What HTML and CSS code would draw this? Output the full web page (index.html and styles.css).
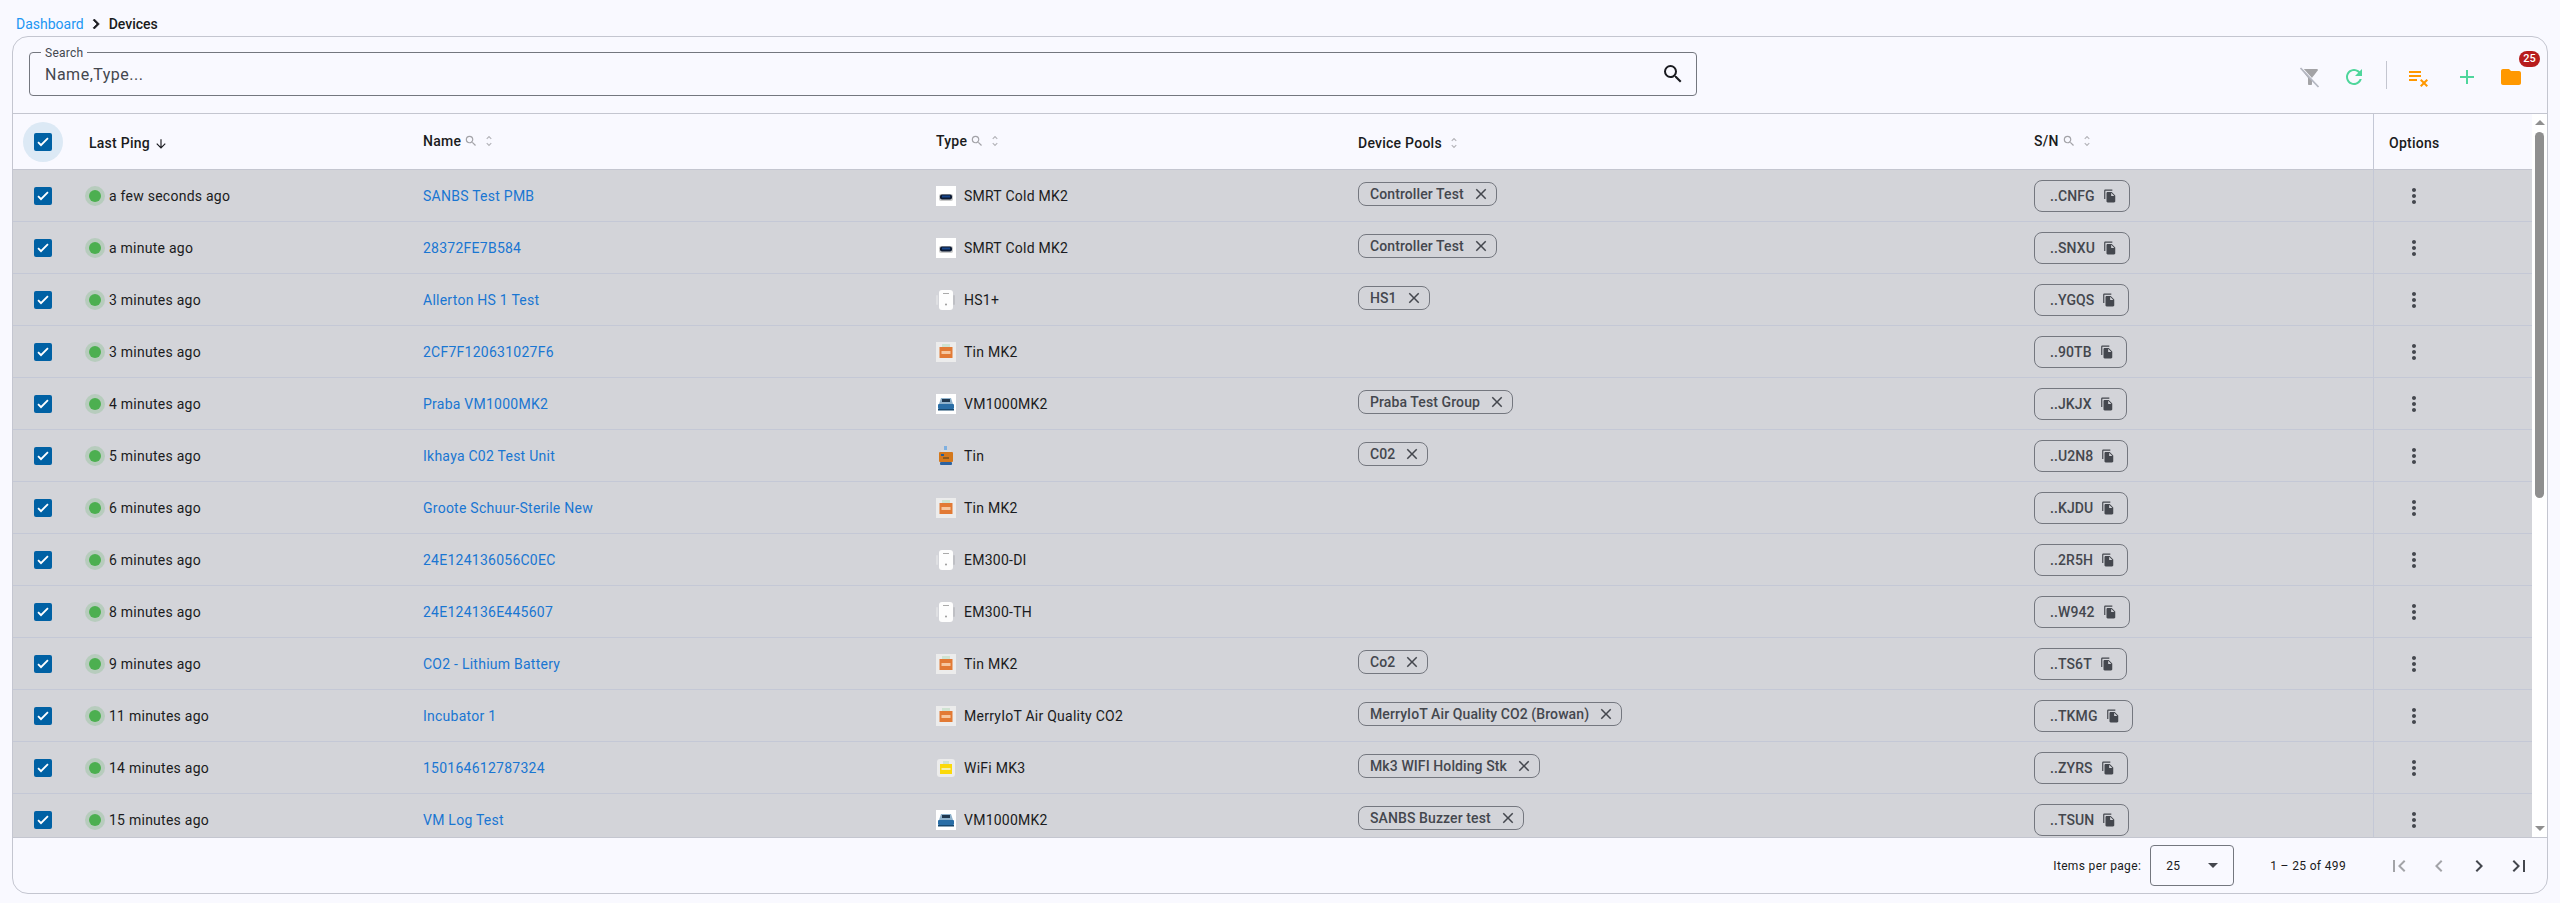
FILE: index.html
```html
<!DOCTYPE html>
<html lang="en">
<head>
<meta charset="utf-8">
<title>Devices</title>
<link rel="stylesheet" href="styles.css">
</head>
<body>
<svg class="defs" width="0" height="0" aria-hidden="true">
  <symbol id="i-search" viewBox="0 0 24 24"><path d="M15.5 14h-.79l-.28-.27A6.471 6.471 0 0 0 16 9.5 6.5 6.5 0 1 0 9.5 16c1.61 0 3.09-.59 4.23-1.57l.27.28v.79l5 4.99L20.49 19l-4.99-5zm-6 0C7.01 14 5 11.99 5 9.5S7.01 5 9.5 5 14 7.01 14 9.5 11.99 14 9.5 14z"/></symbol>
  <symbol id="i-close" viewBox="0 0 24 24"><path d="M19 6.41 17.59 5 12 10.59 6.41 5 5 6.41 10.59 12 5 17.59 6.41 19 12 13.41 17.59 19 19 17.59 13.41 12z"/></symbol>
  <symbol id="i-more" viewBox="0 0 24 24"><path d="M12 8c1.1 0 2-.9 2-2s-.9-2-2-2-2 .9-2 2 .9 2 2 2zm0 2c-1.1 0-2 .9-2 2s.9 2 2 2 2-.9 2-2-.9-2-2-2zm0 6c-1.1 0-2 .9-2 2s.9 2 2 2 2-.9 2-2-.9-2-2-2z"/></symbol>
  <symbol id="i-unfold" viewBox="0 0 24 24"><path d="M12 5.83 15.17 9l1.41-1.41L12 3 7.41 7.59 8.83 9 12 5.83zm0 12.34L8.83 15l-1.41 1.41L12 21l4.59-4.59L15.17 15 12 18.17z"/></symbol>
  <symbol id="i-copy" viewBox="0 0 24 24"><path d="M16 1H4c-1.1 0-2 .9-2 2v14h2V3h12V1zm-1 4 6 6v10c0 1.1-.9 2-2 2H7.99C6.89 23 6 22.1 6 21l.01-14c0-1.1.89-2 1.99-2h7zm-1 7h5.5L14 6.5V12z"/></symbol>
  <symbol id="i-check" viewBox="0 0 18 18"><path d="M7 13.4 3.4 9.8l1.3-1.3L7 10.8l6.3-6.3 1.3 1.3z"/></symbol>
  <symbol id="d-cold" viewBox="0 0 20 20"><rect width="20" height="20" fill="#fff"/><rect x="3" y="8" width="14" height="7" rx="2" fill="#c9c9c9"/><rect x="4" y="8.5" width="12" height="5" rx="2" fill="#0c1a33"/><rect x="6" y="9.5" width="8" height="2" fill="#17458a"/></symbol>
  <symbol id="d-plug" viewBox="0 0 20 20"><rect x="0" y="5" width="2" height="10" rx="1" fill="#dfe0e3"/><rect x="17" y="5" width="2" height="10" rx="1" fill="#bfc0c5"/><rect x="3" y="0" width="14" height="20" rx="3" fill="#fdfdfd"/><rect x="7" y="3" width="6" height="1" fill="#aaa"/><circle cx="10" cy="14.5" r="1" fill="#9a9a9a"/></symbol>
  <symbol id="d-tin" viewBox="0 0 20 20"><rect width="20" height="20" fill="#ececec"/><rect x="6" y="2" width="8" height="3" fill="#cfe3d2"/><rect x="3.500" y="5" width="13" height="11" fill="#e27a35"/><rect x="5.500" y="9" width="9" height="3" fill="#f6c79f"/></symbol>
  <symbol id="d-vm" viewBox="0 0 20 20"><rect width="20" height="20" fill="#fff"/><path d="M5 4h10l2 6H3z" fill="#8fb2cc"/><rect x="6" y="5" width="8" height="3" fill="#20384f"/><rect x="2" y="10" width="16" height="5" rx="1" fill="#2a6ea6"/><rect x="2" y="15" width="16" height="1.500" fill="#17486f"/></symbol>
  <symbol id="d-box" viewBox="0 0 20 20"><rect x="8" y="0" width="3" height="4" fill="#7fb0e0"/><rect x="5" y="4" width="10" height="3" fill="#d8dade"/><rect x="3" y="6" width="14" height="10" rx="1" fill="#d4781c"/><rect x="5" y="8" width="3" height="2" fill="#235e9c"/><rect x="7" y="11" width="6" height="2" fill="#8a5a20"/><rect x="4" y="16" width="12" height="3" rx="1" fill="#2b62a0"/></symbol>
  <symbol id="d-wifi" viewBox="0 0 20 20"><rect x="1" y="1" width="18" height="18" rx="3" fill="#ececec"/><rect x="7" y="3" width="6" height="3" fill="#cfe3d2"/><rect x="4" y="6" width="12" height="10" fill="#fbd90a"/><rect x="5.500" y="10" width="9" height="2" fill="#f3f0b0"/></symbol>
</svg>

<nav class="crumbs">
  <a class="crumb-link">Dashboard</a>
  <svg class="crumb-sep" viewBox="0 0 24 24"><path d="M10 6 8.590 7.410 13.170 12l-4.580 4.590L10 18l6-6z"/></svg>
  <span class="crumb-current">Devices</span>
</nav>

<main class="card">
  <header class="toolbar">
    <div class="search">
      <span class="search-label">Search</span>
      <span class="search-input">Name,Type...</span>
      <svg class="search-icon"><use href="#i-search"/></svg>
    </div>
    <div class="actions">
      <svg class="act act-filter" viewBox="0 0 24 24"><path d="M4.250 5.610C6.270 8.200 10 13 10 13v6c0 .55.45 1 1 1h2c.55 0 1-.45 1-1v-6s3.720-4.800 5.740-7.390A.998.998 0 0 0 18.950 4H5.040a1 1 0 0 0-.79 1.610z"/><path class="slash-gap" d="M3.500 2.500 21 21.500"/><path class="slash" d="M2.500 3 20.500 22"/></svg>
      <svg class="act act-refresh" viewBox="0 0 24 24"><path d="M17.650 6.350C16.200 4.900 14.210 4 12 4c-4.420 0-7.990 3.580-7.990 8s3.570 8 7.990 8c3.730 0 6.840-2.550 7.730-6h-2.080c-.82 2.330-3.040 4-5.650 4-3.310 0-6-2.690-6-6s2.690-6 6-6c1.660 0 3.140.69 4.220 1.780L13 11h7V4l-2.350 2.350z"/></svg>
      <span class="act-divider"></span>
      <svg class="act act-clear" viewBox="0 0 24 24"><path d="M14 10H2v2h12v-2zm0-4H2v2h12V6zM2 16h8v-2H2v2zm12.410 6L17 19.410 19.590 22 21 20.590 18.410 18 21 15.410 19.590 14 17 16.590 14.410 14 13 15.410 15.590 18 13 20.590 14.410 22z"/></svg>
      <svg class="act act-add" viewBox="0 0 24 24"><path d="M19 13h-6v6h-2v-6H5v-2h6V5h2v6h6v2z"/></svg>
      <span class="folder">
        <svg class="act act-folder" viewBox="0 0 24 24"><path d="M10 4H4c-1.100 0-1.990.9-1.990 2L2 18c0 1.100.9 2 2 2h16c1.100 0 2-.9 2-2V8c0-1.100-.9-2-2-2h-8l-2-2z"/></svg>
        <span class="badge">25</span>
      </span>
    </div>
  </header>

  <section class="grid-area">
    <div class="table-clip">
      <table class="devices">
        <colgroup>
          <col class="c-sel"><col class="c-ping"><col class="c-name"><col class="c-type"><col class="c-pool"><col class="c-sn"><col class="c-opt">
        </colgroup>
        <thead>
          <tr>
            <th class="sel"><span class="check-halo"><span class="check"><svg><use href="#i-check"/></svg></span></span></th>
            <th>Last Ping <svg class="sort-arrow" viewBox="0 0 24 24"><path d="M20 12l-1.410-1.410L13 16.170V4h-2v12.170l-5.580-5.590L4 12l8 8 8-8z"/></svg></th>
            <th class="raised">Name<svg class="h-search"><use href="#i-search"/></svg><svg class="h-sort"><use href="#i-unfold"/></svg></th>
            <th class="raised">Type<svg class="h-search"><use href="#i-search"/></svg><svg class="h-sort"><use href="#i-unfold"/></svg></th>
            <th>Device Pools<svg class="h-sort solo"><use href="#i-unfold"/></svg></th>
            <th class="raised">S/N<svg class="h-search"><use href="#i-search"/></svg><svg class="h-sort"><use href="#i-unfold"/></svg></th>
            <th class="opt">Options</th>
          </tr>
        </thead>
        <tbody>
          <tr>
            <td class="sel"><span class="check"><svg><use href="#i-check"/></svg></span></td>
            <td><span class="ping"><i class="dot"></i>a few seconds ago</span></td>
            <td><a class="link">SANBS Test PMB</a></td>
            <td><span class="type"><svg class="thumb-img"><use href="#d-cold"/></svg>SMRT Cold MK2</span></td>
            <td><span class="pool">Controller Test<svg><use href="#i-close"/></svg></span></td>
            <td><span class="sn">..CNFG<svg><use href="#i-copy"/></svg></span></td>
            <td class="opt"><svg class="more"><use href="#i-more"/></svg></td>
          </tr>
          <tr>
            <td class="sel"><span class="check"><svg><use href="#i-check"/></svg></span></td>
            <td><span class="ping"><i class="dot"></i>a minute ago</span></td>
            <td><a class="link">28372FE7B584</a></td>
            <td><span class="type"><svg class="thumb-img"><use href="#d-cold"/></svg>SMRT Cold MK2</span></td>
            <td><span class="pool">Controller Test<svg><use href="#i-close"/></svg></span></td>
            <td><span class="sn">..SNXU<svg><use href="#i-copy"/></svg></span></td>
            <td class="opt"><svg class="more"><use href="#i-more"/></svg></td>
          </tr>
          <tr>
            <td class="sel"><span class="check"><svg><use href="#i-check"/></svg></span></td>
            <td><span class="ping"><i class="dot"></i>3 minutes ago</span></td>
            <td><a class="link">Allerton HS 1 Test</a></td>
            <td><span class="type"><svg class="thumb-img"><use href="#d-plug"/></svg>HS1+</span></td>
            <td><span class="pool">HS1<svg><use href="#i-close"/></svg></span></td>
            <td><span class="sn">..YGQS<svg><use href="#i-copy"/></svg></span></td>
            <td class="opt"><svg class="more"><use href="#i-more"/></svg></td>
          </tr>
          <tr>
            <td class="sel"><span class="check"><svg><use href="#i-check"/></svg></span></td>
            <td><span class="ping"><i class="dot"></i>3 minutes ago</span></td>
            <td><a class="link">2CF7F120631027F6</a></td>
            <td><span class="type"><svg class="thumb-img"><use href="#d-tin"/></svg>Tin MK2</span></td>
            <td></td>
            <td><span class="sn">..90TB<svg><use href="#i-copy"/></svg></span></td>
            <td class="opt"><svg class="more"><use href="#i-more"/></svg></td>
          </tr>
          <tr>
            <td class="sel"><span class="check"><svg><use href="#i-check"/></svg></span></td>
            <td><span class="ping"><i class="dot"></i>4 minutes ago</span></td>
            <td><a class="link">Praba VM1000MK2</a></td>
            <td><span class="type"><svg class="thumb-img"><use href="#d-vm"/></svg>VM1000MK2</span></td>
            <td><span class="pool">Praba Test Group<svg><use href="#i-close"/></svg></span></td>
            <td><span class="sn">..JKJX<svg><use href="#i-copy"/></svg></span></td>
            <td class="opt"><svg class="more"><use href="#i-more"/></svg></td>
          </tr>
          <tr>
            <td class="sel"><span class="check"><svg><use href="#i-check"/></svg></span></td>
            <td><span class="ping"><i class="dot"></i>5 minutes ago</span></td>
            <td><a class="link">Ikhaya C02 Test Unit</a></td>
            <td><span class="type"><svg class="thumb-img"><use href="#d-box"/></svg>Tin</span></td>
            <td><span class="pool">C02<svg><use href="#i-close"/></svg></span></td>
            <td><span class="sn">..U2N8<svg><use href="#i-copy"/></svg></span></td>
            <td class="opt"><svg class="more"><use href="#i-more"/></svg></td>
          </tr>
          <tr>
            <td class="sel"><span class="check"><svg><use href="#i-check"/></svg></span></td>
            <td><span class="ping"><i class="dot"></i>6 minutes ago</span></td>
            <td><a class="link">Groote Schuur-Sterile New</a></td>
            <td><span class="type"><svg class="thumb-img"><use href="#d-tin"/></svg>Tin MK2</span></td>
            <td></td>
            <td><span class="sn">..KJDU<svg><use href="#i-copy"/></svg></span></td>
            <td class="opt"><svg class="more"><use href="#i-more"/></svg></td>
          </tr>
          <tr>
            <td class="sel"><span class="check"><svg><use href="#i-check"/></svg></span></td>
            <td><span class="ping"><i class="dot"></i>6 minutes ago</span></td>
            <td><a class="link">24E124136056C0EC</a></td>
            <td><span class="type"><svg class="thumb-img"><use href="#d-plug"/></svg>EM300-DI</span></td>
            <td></td>
            <td><span class="sn">..2R5H<svg><use href="#i-copy"/></svg></span></td>
            <td class="opt"><svg class="more"><use href="#i-more"/></svg></td>
          </tr>
          <tr>
            <td class="sel"><span class="check"><svg><use href="#i-check"/></svg></span></td>
            <td><span class="ping"><i class="dot"></i>8 minutes ago</span></td>
            <td><a class="link">24E124136E445607</a></td>
            <td><span class="type"><svg class="thumb-img"><use href="#d-plug"/></svg>EM300-TH</span></td>
            <td></td>
            <td><span class="sn">..W942<svg><use href="#i-copy"/></svg></span></td>
            <td class="opt"><svg class="more"><use href="#i-more"/></svg></td>
          </tr>
          <tr>
            <td class="sel"><span class="check"><svg><use href="#i-check"/></svg></span></td>
            <td><span class="ping"><i class="dot"></i>9 minutes ago</span></td>
            <td><a class="link">CO2 - Lithium Battery</a></td>
            <td><span class="type"><svg class="thumb-img"><use href="#d-tin"/></svg>Tin MK2</span></td>
            <td><span class="pool">Co2<svg><use href="#i-close"/></svg></span></td>
            <td><span class="sn">..TS6T<svg><use href="#i-copy"/></svg></span></td>
            <td class="opt"><svg class="more"><use href="#i-more"/></svg></td>
          </tr>
          <tr>
            <td class="sel"><span class="check"><svg><use href="#i-check"/></svg></span></td>
            <td><span class="ping"><i class="dot"></i>11 minutes ago</span></td>
            <td><a class="link">Incubator 1</a></td>
            <td><span class="type"><svg class="thumb-img"><use href="#d-tin"/></svg>MerryIoT Air Quality CO2</span></td>
            <td><span class="pool">MerryIoT Air Quality CO2 (Browan)<svg><use href="#i-close"/></svg></span></td>
            <td><span class="sn">..TKMG<svg><use href="#i-copy"/></svg></span></td>
            <td class="opt"><svg class="more"><use href="#i-more"/></svg></td>
          </tr>
          <tr>
            <td class="sel"><span class="check"><svg><use href="#i-check"/></svg></span></td>
            <td><span class="ping"><i class="dot"></i>14 minutes ago</span></td>
            <td><a class="link">150164612787324</a></td>
            <td><span class="type"><svg class="thumb-img"><use href="#d-wifi"/></svg>WiFi MK3</span></td>
            <td><span class="pool">Mk3 WIFI Holding Stk<svg><use href="#i-close"/></svg></span></td>
            <td><span class="sn">..ZYRS<svg><use href="#i-copy"/></svg></span></td>
            <td class="opt"><svg class="more"><use href="#i-more"/></svg></td>
          </tr>
          <tr>
            <td class="sel"><span class="check"><svg><use href="#i-check"/></svg></span></td>
            <td><span class="ping"><i class="dot"></i>15 minutes ago</span></td>
            <td><a class="link">VM Log Test</a></td>
            <td><span class="type"><svg class="thumb-img"><use href="#d-vm"/></svg>VM1000MK2</span></td>
            <td><span class="pool">SANBS Buzzer test<svg><use href="#i-close"/></svg></span></td>
            <td><span class="sn">..TSUN<svg><use href="#i-copy"/></svg></span></td>
            <td class="opt"><svg class="more"><use href="#i-more"/></svg></td>
          </tr>
        </tbody>
      </table>
    </div>
    <div class="scrollbar">
      <span class="sb-up"></span>
      <span class="sb-track"><span class="sb-thumb"></span></span>
      <span class="sb-down"></span>
    </div>
  </section>

  <footer class="pager">
    <span class="pager-label">Items per page:</span>
    <span class="pager-select"><span>25</span><i class="caret"></i></span>
    <span class="pager-range">1 – 25 of 499</span>
    <span class="pager-buttons">
      <svg class="pg off" viewBox="0 0 24 24"><path d="M18.410 16.590 13.820 12l4.590-4.590L17 6l-6 6 6 6zM6 6h2v12H6z"/></svg>
      <svg class="pg off" viewBox="0 0 24 24"><path d="M15.410 7.410 14 6l-6 6 6 6 1.410-1.410L10.830 12z"/></svg>
      <svg class="pg" viewBox="0 0 24 24"><path d="M10 6 8.590 7.410 13.170 12l-4.580 4.590L10 18l6-6z"/></svg>
      <svg class="pg" viewBox="0 0 24 24"><path d="M5.590 7.410 10.180 12l-4.590 4.590L7 18l6-6-6-6zM16 6h2v12h-2z"/></svg>
    </span>
  </footer>
</main>
</body>
</html>
```

FILE: styles.css
```css
* { box-sizing: border-box; }
html, body { height: 100%; }
body {
  margin: 0;
  background: #f9f9ff;
  color: #1a1b20;
  font-family: Roboto, "Liberation Sans", sans-serif;
  font-size: 14px;
  letter-spacing: .25px;
  overflow: hidden;
}
.defs { position: absolute; }

.crumbs {
  height: 36px;
  padding: 12px 0 0 16px;
  display: flex;
  align-items: center;
  font-size: 14px;
  letter-spacing: 0;
}
.crumb-link { color: #2196f3; }
.crumb-sep { width: 20px; height: 20px; margin: 0 3px 0 2px; fill: #1a1b20; stroke: #1a1b20; stroke-width: .8; }
.crumb-current { font-weight: 500; }

.card {
  margin-left: 12px;
  width: 2536px;
  height: 858px;
  border: 1px solid #c4c6d0;
  border-radius: 16px;
  display: flex;
  flex-direction: column;
  overflow: hidden;
}

.toolbar {
  height: 77px;
  flex: none;
  border-bottom: 1px solid #c4c6d0;
  display: flex;
  align-items: flex-start;
  padding: 15px 0 0 16px;
}
.search {
  position: relative;
  width: 1668px;
  height: 44px;
  border: 1px solid #74777f;
  border-radius: 4px;
  display: flex;
  align-items: center;
  justify-content: space-between;
  padding: 0 11px 0 15px;
}
.search-label {
  position: absolute;
  left: 11px;
  top: -8px;
  padding: 0 4px;
  background: #f9f9ff;
  font-size: 12px;
  line-height: 16px;
  color: #44474f;
}
.search-input { font-size: 16px; letter-spacing: .5px; color: #44474f; }
.search-icon { width: 24px; height: 24px; fill: #1a1b20; }

.actions {
  margin-left: auto;
  height: 50px;
  display: flex;
  align-items: center;
  padding-right: 24px;
}
.act { display: block; flex: none; }
.act-filter { width: 24px; height: 24px; margin-right: 20px; fill: #a3a3a6; }
.act-filter .slash { stroke: #b4b7c2; stroke-width: 1.8; fill: none; }
.act-filter .slash-gap { stroke: #f9f9ff; stroke-width: 1.2; fill: none; }
.act-refresh { width: 24px; height: 24px; margin-right: 20px; fill: #4fd69c; }
.act-divider { width: 1px; height: 28px; background: #c4c6d0; margin: 0 20px 4px 0; }
.act-clear { width: 24px; height: 24px; margin-right: 24px; fill: #ff9800; }
.act-add { width: 24px; height: 24px; margin-right: 20px; fill: #4fd69c; }
.act-folder { width: 24px; height: 24px; fill: #ff9800; }
.folder { position: relative; display: block; }
.badge {
  position: absolute;
  left: 20px;
  top: -14px;
  width: 21px;
  height: 16px;
  border-radius: 8px;
  background: #b71c1c;
  color: #fff;
  font-size: 11px;
  font-weight: 500;
  line-height: 16px;
  letter-spacing: 0;
  text-align: center;
}

.grid-area { flex: 1; min-height: 0; display: flex; }
.table-clip { flex: 1; min-width: 0; overflow: hidden; }

.devices {
  width: 2519px;
  table-layout: fixed;
  border-collapse: separate;
  border-spacing: 0;
}
.c-sel { width: 60px; }
.c-ping { width: 334px; }
.c-name { width: 513px; }
.c-type { width: 422px; }
.c-pool { width: 676px; }
.c-sn { width: 355px; }
.c-opt { width: 159px; }

.devices th, .devices td {
  padding: 0 0 0 16px;
  text-align: left;
  white-space: nowrap;
  border-bottom: 1px solid #c4c8d6;
}
.devices th {
  height: 56px;
  padding-top: 2px;
  font-weight: 500;
  background: #f9f9ff;
  vertical-align: middle;
  border-bottom-color: #c4c6d0;
}
.devices td {
  height: 52px;
  background: #d3d4d9;
  vertical-align: middle;
}
.devices .sel { padding: 0 0 0 21px; }
.devices .opt { border-left: 1px solid #c4c8d6; padding-left: 15px; }
.devices th.sel { padding-top: 0; }
.devices th.raised { padding-top: 0; padding-bottom: 1px; }

.check-halo {
  width: 40px;
  height: 40px;
  margin-left: -11px;
  border-radius: 50%;
  background: #dce9f5;
  display: flex;
  align-items: center;
  justify-content: center;
}
.check {
  width: 18px;
  height: 18px;
  border-radius: 2px;
  background: #0061a4;
  display: block;
}
.check svg { width: 18px; height: 18px; display: block; fill: #fff; }

.sort-arrow { width: 14px; height: 14px; vertical-align: -3px; fill: #1a1b20; }
.h-search { width: 14px; height: 14px; margin-left: 3px; vertical-align: -2px; fill: #a3a3a8; }
.h-sort { width: 14px; height: 14px; margin-left: 4px; vertical-align: -2px; fill: #b5b5ba; }
.h-sort.solo { margin-left: 5px; }

.ping { display: flex; align-items: center; margin-left: -4px; }
.dot {
  width: 12px;
  height: 12px;
  border-radius: 50%;
  background: #4caf50;
  box-shadow: 0 0 0 4px rgba(76, 175, 80, .2);
  margin: 0 8px 0 4px;
  flex: none;
}
.link { color: #1976d2; }

.type { display: flex; align-items: center; }
.thumb-img { width: 20px; height: 20px; margin-right: 8px; flex: none; }

.pool {
  display: inline-flex;
  align-items: center;
  height: 24px;
  margin-bottom: 4px;
  padding: 0 6px 0 11px;
  border: 1px solid #74777f;
  border-radius: 8px;
  color: #44474e;
  font-weight: 500;
  letter-spacing: .1px;
  vertical-align: middle;
}
.pool svg { width: 18px; height: 18px; margin-left: 8px; fill: #44474e; }

.sn {
  display: inline-flex;
  align-items: center;
  height: 32px;
  padding: 0 12px 0 15px;
  border: 1px solid #74777f;
  border-radius: 8px;
  color: #44474e;
  font-weight: 500;
  letter-spacing: .1px;
  vertical-align: middle;
}
.sn svg { width: 14px; height: 14px; margin-left: 8px; fill: #44474e; }

.more { width: 24px; height: 24px; margin-left: 13px; display: block; fill: #44474e; }

.scrollbar {
  width: 15px;
  flex: none;
  background: #fff;
  display: flex;
  flex-direction: column;
  align-items: center;
}
.sb-up, .sb-down { width: 0; height: 0; flex: none; border-left: 5px solid transparent; border-right: 5px solid transparent; }
.sb-up { margin-top: 6px; border-bottom: 5px solid #8f8f8f; }
.sb-down { margin-bottom: 6px; border-top: 5px solid #8f8f8f; }
.sb-track { flex: 1; width: 100%; padding-top: 7px; display: block; }
.sb-thumb { display: block; width: 9px; height: 366px; margin-left: 3px; border-radius: 5px; background: #8f8f8f; }

.pager {
  height: 56px;
  flex: none;
  border-top: 1px solid #c4c6d0;
  display: flex;
  align-items: center;
  justify-content: flex-end;
  padding-right: 8px;
  font-size: 12px;
  letter-spacing: .35px;
}
.pager-select {
  width: 84px;
  height: 41px;
  margin-left: 9px;
  border: 1px solid #74777f;
  border-radius: 4px;
  padding: 0 15px;
  display: flex;
  align-items: center;
  justify-content: space-between;
}
.caret { width: 0; height: 0; border-left: 5px solid transparent; border-right: 5px solid transparent; border-top: 5px solid #44474e; }
.pager-range { margin-left: 36px; }
.pager-buttons { display: flex; margin-left: 33px; }
.pg { width: 24px; height: 24px; margin: 0 8px; fill: #44474e; }
.pg.off { fill: #a3a4a8; }
```
